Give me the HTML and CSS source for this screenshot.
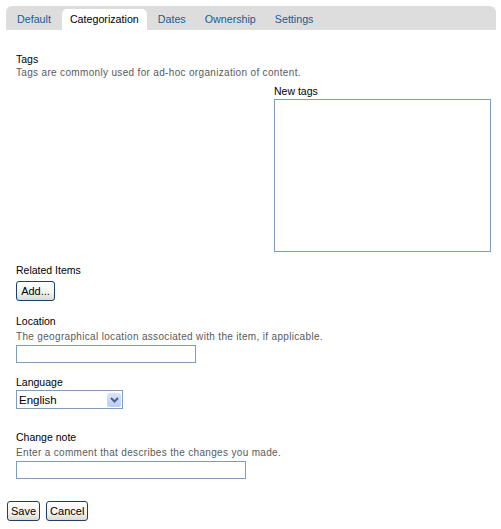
FILE: index.html
```html
<!DOCTYPE html>
<html>
<head>
<meta charset="utf-8">
<link rel="stylesheet" href="styles.css">
</head>
<body>
<div class="tabs">
  <span class="tab">Default</span>
  <span class="tab active">Categorization</span>
  <span class="tab">Dates</span>
  <span class="tab">Ownership</span>
  <span class="tab">Settings</span>
</div>
<div class="form">
  <div class="field tags-field">
    <div class="label">Tags</div>
    <div class="help">Tags are commonly used for ad-hoc organization of content.</div>
    <div class="newtags">
      <div class="label">New tags</div>
      <div class="textarea"></div>
    </div>
  </div>
  <div class="field related">
    <div class="label">Related Items</div>
    <button class="btn add">Add...</button>
  </div>
  <div class="field location">
    <div class="label">Location</div>
    <div class="help">The geographical location associated with the item, if applicable.</div>
    <div class="input loc-input"></div>
  </div>
  <div class="field language">
    <div class="label">Language</div>
    <div class="select"><span class="select-text">English</span><span class="arrow"><svg width="13" height="13" viewBox="0 0 13 13"><path d="M3 5 L6.5 8.5 L10 5" fill="none" stroke="#4d6185" stroke-width="2"/></svg></span></div>
  </div>
  <div class="field change">
    <div class="label">Change note</div>
    <div class="help">Enter a comment that describes the changes you made.</div>
    <div class="input note-input"></div>
  </div>
</div>
<div class="actions">
  <button class="btn">Save</button>
  <button class="btn">Cancel</button>
</div>
</body>
</html>
```
FILE: styles.css
```css
html, body {
  margin: 0;
  padding: 0;
  background: #fff;
}
body {
  font-family: "Liberation Sans", Arial, sans-serif;
  font-size: 10.5px;
  color: #000;
}
.tabs {
  margin: 6px 5px 0 6px;
  height: 24px;
  background: #dddddd;
  border-radius: 6px 6px 0 0;
  display: flex;
  align-items: flex-end;
  padding-left: 3px;
  font-size: 10.7px;
}
.tab {
  height: 21px;
  line-height: 21px;
  padding: 0 8px;
  margin-right: 3px;
  color: #205c90;
  border-radius: 5px 5px 0 0;
}
.tab.active {
  background: #fff;
  color: #000;
}
.form {
  padding-left: 16px;
}
.label {
  line-height: 14px;
}
.help {
  line-height: 13px;
  color: #5a5a5a;
  font-size: 10px;
  letter-spacing: 0.33px;
}
.tags-field {
  padding-top: 23px;
}
.tags-field > .label {
  line-height: 13px;
}
.newtags {
  margin-left: 258px;
  margin-top: 5px;
}
.newtags .label {
  margin-bottom: 1px;
}
.textarea {
  width: 215px;
  height: 151px;
  border: 1px solid #7f9db9;
}
.related {
  margin-top: 11px;
}
.btn {
  font-family: "Liberation Sans", Arial, sans-serif;
  font-size: 11px;
  height: 20px;
  padding: 0 3px;
  border: 1px solid #1e3f6a;
  border-radius: 3px;
  background: linear-gradient(#ffffff, #f3f2ee 60%, #dcd9cf);
  color: #000;
  margin: 0;
  line-height: 18px;
}
.add {
  margin-top: 4px;
  width: 39px;
  padding: 0;
  display: block;
}
.location {
  margin-top: 13px;
}
.location .help {
  margin-top: 2px;
}
.input {
  border: 1px solid #7f9db9;
  height: 16px;
  background: #fff;
}
.loc-input {
  width: 178px;
  margin-top: 2px;
}
.language {
  margin-top: 12px;
}
.select {
  margin-top: 1px;
  width: 103px;
  height: 17px;
  border: 1px solid #7f9db9;
  display: flex;
  align-items: center;
  justify-content: space-between;
  font-size: 11.5px;
  padding-left: 2px;
}
.arrow {
  width: 14px;
  height: 14px;
  margin-right: 1px;
  background: linear-gradient(#d9e5fb, #b8cdf5);
  border-radius: 2px;
  display: flex;
  align-items: center;
  justify-content: center;
}
.change {
  margin-top: 21px;
}
.change .help {
  margin-top: 2px;
}
.note-input {
  width: 228px;
  margin-top: 2px;
}
.actions {
  margin-top: 22px;
  padding-left: 7px;
  display: flex;
  gap: 6px;
}
```
